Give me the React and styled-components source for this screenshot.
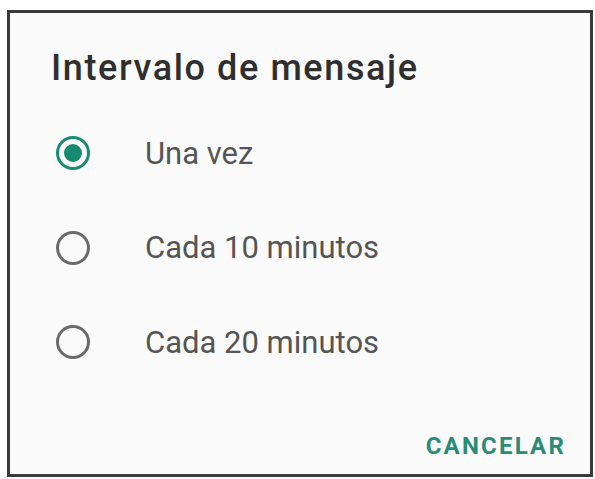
import { useState } from "react"
import styled, { createGlobalStyle } from "styled-components"

const GlobalStyle = createGlobalStyle`
  html, body {
    margin: 0;
    padding: 0;
    background: #ffffff;
  }
  body {
    font-family: Roboto, "Noto Sans", sans-serif;
  }
`

const options = ["Una vez", "Cada 10 minutos", "Cada 20 minutos"]

const App = () => {
  const [selected, setSelected] = useState(0)

  return (
    <>
      <GlobalStyle />
      <Page>
        <Dialog>
          <Title>Intervalo de mensaje</Title>
          <List>
            {options.map((label, i) => (
              <Option key={label} onClick={() => setSelected(i)}>
                <Radio $checked={selected === i} />
                <Label>{label}</Label>
              </Option>
            ))}
          </List>
          <Actions>
            <TextButton>CANCELAR</TextButton>
          </Actions>
        </Dialog>
      </Page>
    </>
  )
}

const Page = styled.div`
  padding: 10px 2px 2px 7px;
`

const Dialog = styled.div`
  width: 580px;
  height: 461px;
  border: 3px solid #3a3a3a;
  background: #fafafa;
  display: flex;
  flex-direction: column;
  box-sizing: content-box;
`

const Title = styled.h2`
  margin: 0;
  padding: 35px 0 0 41px;
  font-size: 36px;
  font-weight: 500;
  letter-spacing: 1.6px;
  color: #2f2f2f;
  line-height: 40px;
`

const List = styled.div`
  display: flex;
  flex-direction: column;
  margin-top: 18px;
`

const Option = styled.label`
  display: flex;
  align-items: center;
  height: 94.5px;
  padding-left: 46px;
  cursor: pointer;
`

const Radio = styled.span`
  position: relative;
  width: 34px;
  height: 34px;
  box-sizing: border-box;
  border-radius: 50%;
  border: 3.5px solid ${p => (p.$checked ? "#1b8a72" : "#6a6a6a")};
  flex-shrink: 0;

  &::after {
    content: "";
    display: ${p => (p.$checked ? "block" : "none")};
    position: absolute;
    inset: 5px;
    border-radius: 50%;
    background: #168a6f;
  }
`

const Label = styled.span`
  margin-left: 55px;
  font-size: 31px;
  color: #555555;
`

const Actions = styled.div`
  margin-top: auto;
  display: flex;
  justify-content: flex-end;
  padding: 0 24px 14px 0;
`

const TextButton = styled.button`
  border: none;
  background: none;
  padding: 0;
  font-family: Roboto, sans-serif;
  font-size: 24px;
  font-weight: 700;
  letter-spacing: 2.2px;
  color: #2a8c76;
  cursor: pointer;
`

export default App
